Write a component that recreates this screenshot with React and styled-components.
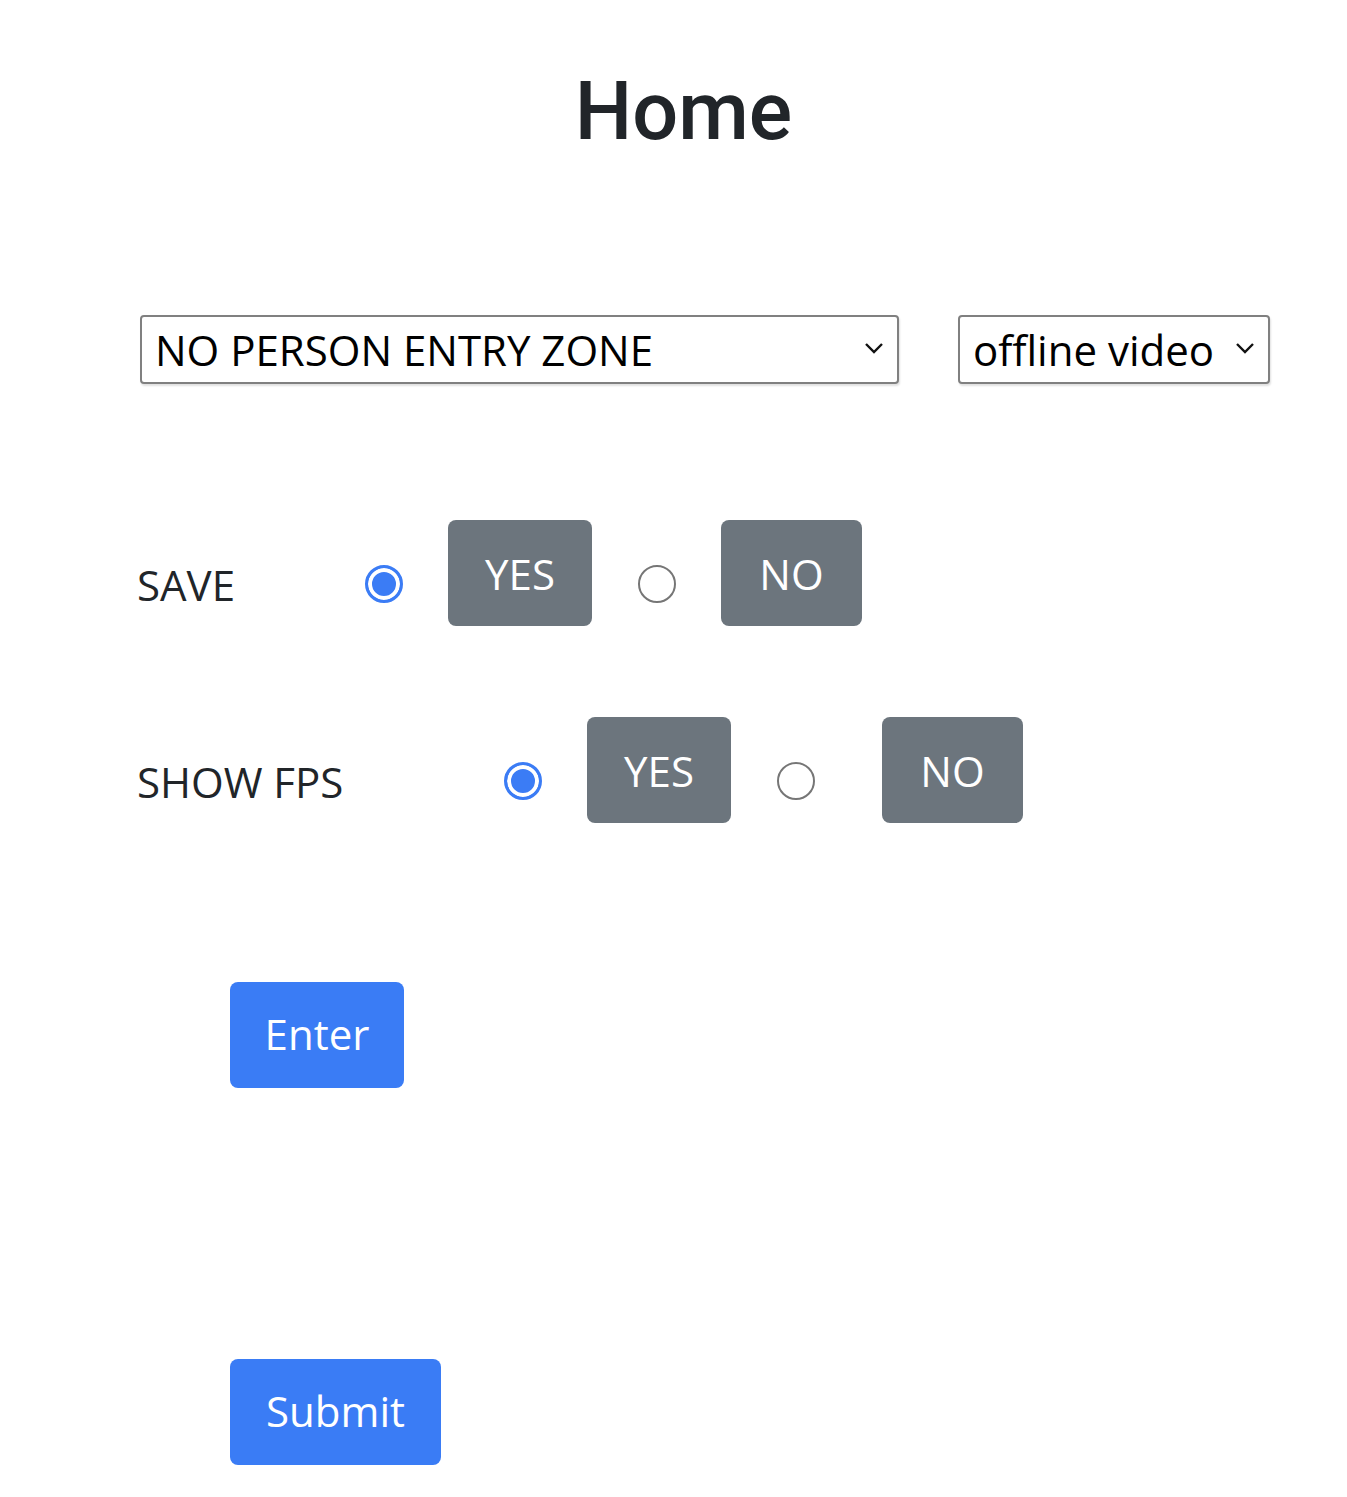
import React, { useState } from "react";
import styled, { createGlobalStyle } from "styled-components";

const GlobalStyle = createGlobalStyle`
  body {
    margin: 0;
    background: #ffffff;
    font-family: "Open Sans", "Noto Sans", sans-serif;
    color: #212529;
  }
`;

const Page = styled.div`
  width: 1347px;
  min-height: 1497px;
  display: flex;
  flex-direction: column;
`;

const Title = styled.h1`
  margin: 64px 0 0 20px;
  text-align: center;
  font-family: Roboto, "Liberation Sans", sans-serif;
  font-weight: 500;
  font-size: 81px;
  line-height: 96px;
  color: #212529;
`;

const SelectRow = styled.div`
  display: flex;
  gap: 59px;
  margin: 155px 0 0 140px;
`;

const SelectWrap = styled.div`
  position: relative;
  width: ${({ $w }) => $w}px;
  height: 69px;
`;

const Select = styled.select`
  appearance: none;
  width: 100%;
  height: 100%;
  box-sizing: border-box;
  border: 2px solid #808080;
  border-radius: 4px;
  box-shadow: 1px 2px 2px rgba(0, 0, 0, 0.12);
  padding: 0 40px 0 13px;
  background: #fff;
  font-family: "Open Sans", "Noto Sans", sans-serif;
  font-size: 42px;
  color: #000;
  outline: none;
`;

const Chevron = styled.svg`
  position: absolute;
  right: 14px;
  top: 26px;
  pointer-events: none;
`;

const OptionRow = styled.div`
  display: flex;
  align-items: center;
  margin: ${({ $top }) => $top}px 0 0 137px;
  height: 106px;
`;

const Label = styled.span`
  font-size: 42px;
  width: ${({ $w }) => $w}px;
  margin-top: 22px;
  color: #212529;
`;

const Radio = styled.input.attrs({ type: "radio" })`
  appearance: none;
  margin: 22px 0 0 0;
  width: 38px;
  height: 38px;
  border-radius: 50%;
  box-sizing: border-box;
  border: 2px solid #767676;
  background: #fff;
  flex: none;
  &:checked {
    border: 3px solid #3b7cf5;
    box-shadow: inset 0 0 0 4px #fff;
    background: #3b7cf5;
  }
`;

const GrayButton = styled.button`
  height: 106px;
  width: ${({ $w }) => $w}px;
  margin-left: ${({ $gap }) => $gap}px;
  margin-right: ${({ $after }) => $after || 0}px;
  border: none;
  border-radius: 8px;
  background: #6c757d;
  color: #fff;
  font-family: "Open Sans", "Noto Sans", sans-serif;
  font-size: 42px;
  padding: 0;
  flex: none;
`;

const PrimaryButton = styled.button`
  height: 106px;
  width: ${({ $w }) => $w}px;
  margin: ${({ $top }) => $top}px 0 0 230px;
  border: none;
  border-radius: 8px;
  background: #3a7cf5;
  color: #fff;
  font-family: "Open Sans", "Noto Sans", sans-serif;
  font-size: 42px;
  padding: 0 0 4px;
`;

function ChevronIcon() {
  return (
    <Chevron width="22" height="14" viewBox="0 0 22 14">
      <path d="M3 3 L11 11 L19 3" fill="none" stroke="#111" strokeWidth="2.4" />
    </Chevron>
  );
}

function YesNo({ label, labelW, values, setValue, name }) {
  return (
    <OptionRow $top={values.top}>
      <Label $w={labelW}>{label}</Label>
      <Radio name={name} checked={values.v === "yes"} onChange={() => setValue("yes")} />
      <GrayButton $w={144} $gap={45} $after={46}>YES</GrayButton>
      <Radio name={name} checked={values.v === "no"} onChange={() => setValue("no")} />
      <GrayButton $w={141} $gap={values.noGap}>NO</GrayButton>
    </OptionRow>
  );
}

export default function App() {
  const [save, setSave] = useState("yes");
  const [fps, setFps] = useState("yes");

  return (
    <Page>
      <GlobalStyle />
      <Title>Home</Title>
      <SelectRow>
        <SelectWrap $w={759}>
          <Select defaultValue="npez">
            <option value="npez">NO PERSON ENTRY ZONE</option>
          </Select>
          <ChevronIcon />
        </SelectWrap>
        <SelectWrap $w={312}>
          <Select defaultValue="offline">
            <option value="offline">offline video</option>
          </Select>
          <ChevronIcon />
        </SelectWrap>
      </SelectRow>
      <YesNo
        name="save"
        label="SAVE"
        labelW={228}
        values={{ v: save, top: 136, noGap: 45 }}
        setValue={setSave}
      />
      <YesNo
        name="fps"
        label="SHOW FPS"
        labelW={367}
        values={{ v: fps, top: 91, noGap: 67 }}
        setValue={setFps}
      />
      <PrimaryButton $w={174} $top={159}>Enter</PrimaryButton>
      <PrimaryButton $w={211} $top={271}>Submit</PrimaryButton>
    </Page>
  );
}
